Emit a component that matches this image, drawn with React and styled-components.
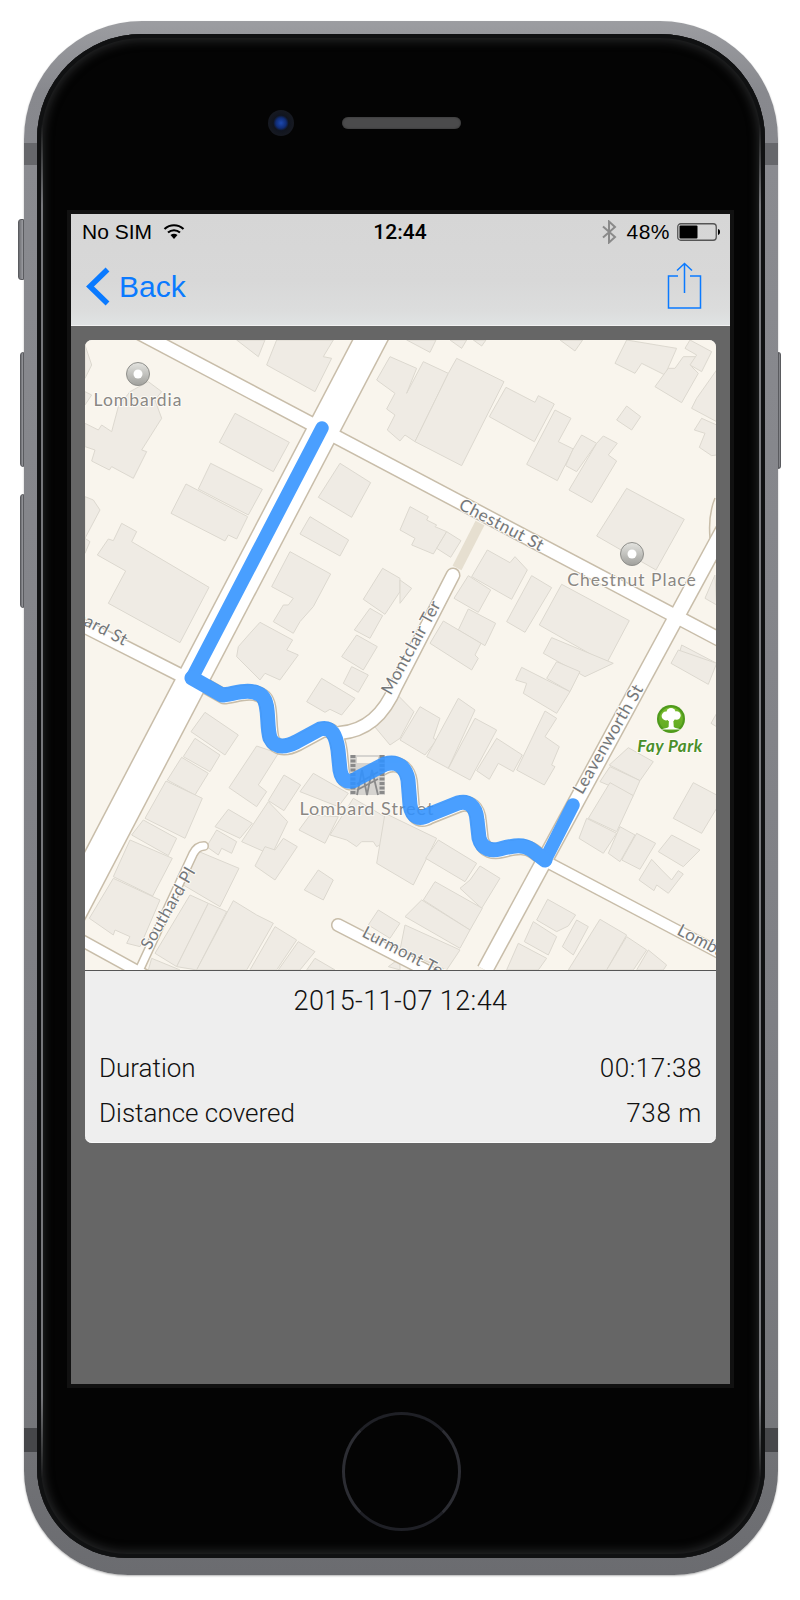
import React from "react";
import styled, { createGlobalStyle } from "styled-components";

const GlobalStyle = createGlobalStyle`
  html, body {
    margin: 0;
    background: #fff;
  }
`;

const Page = styled.div`
  width: 800px;
  height: 1600px;
  box-sizing: border-box;
  padding: 21px 0 0 24px;
  overflow: hidden;
`;

const Phone = styled.div`
  position: relative;
  width: 754px;
  height: 1554px;
  box-sizing: border-box;
  padding: 13px 13px 17px;
  border-radius: 118px 118px 104px 104px;
  background: linear-gradient(
    to bottom,
    #9c9da1 0,
    #88898e 70px,
    #87888d 122px,
    #66676b 122px,
    #66676b 144px,
    #8a8b90 144px,
    #7e7f84 1000px,
    #75767a 1407px,
    #46474a 1407px,
    #46474a 1431px,
    #717276 1431px,
    #6b6c70 1554px
  );
  box-shadow: 0 1px 2px rgba(0, 0, 0, 0.3);
`;

const SideButton = styled.div`
  position: absolute;
  top: ${(p) => p.$top}px;
  ${(p) => (p.$right ? "right: -3px;" : `left: ${-p.$out}px;`)}
  width: ${(p) => (p.$right ? 3 : p.$out)}px;
  height: ${(p) => p.$h}px;
  box-sizing: border-box;
  background: linear-gradient(to right, #6b6c70, #9b9ca1);
  border: 1px solid #5a5b5f;
  border-radius: ${(p) => (p.$right ? "0 3px 3px 0" : "3px 0 0 3px")};
`;

const Bezel = styled.div`
  position: relative;
  height: 100%;
  box-sizing: border-box;
  padding-right: 1px;
  display: flex;
  flex-direction: column;
  align-items: center;
  border-radius: 105px 105px 90px 90px;
  background: #040404;
  box-shadow: inset 0 0 0 4px #101112, inset 0 0 10px 7px #242526;

  /* thin light rim that only shows along the long sides */
  &::before,
  &::after {
    content: "";
    position: absolute;
    top: 90px;
    bottom: 80px;
    width: 2px;
    background: linear-gradient(
      to bottom,
      transparent,
      #77787c 6%,
      #77787c 94%,
      transparent
    );
  }
  &::before {
    left: 4px;
  }
  &::after {
    right: 4px;
  }
`;

const SensorRow = styled.div`
  width: 100%;
  height: 180px;
  display: grid;
  grid-template-columns: 1fr 119px 1fr;
  align-items: start;
  padding: 83px 0 0 2px;
  box-sizing: border-box;
`;

const Camera = styled.div`
  justify-self: end;
  width: 26px;
  height: 26px;
  margin: -7px 48px 0 0;
  border-radius: 50%;
  background: radial-gradient(circle, #1d49b0 0, #102c75 28%, #11151f 42%, #1c1e24 100%);
`;

const Speaker = styled.div`
  width: 119px;
  height: 12px;
  border-radius: 6px;
  background: #4b4b4c;
  box-shadow: inset 0 0 2px #2a2a2a;
`;

const Screen = styled.div`
  width: 659px;
  height: 1170px;
  flex: none;
  background: #666;
  outline: 4px solid #111;
  display: flex;
  flex-direction: column;
  font-family: "Liberation Sans", Arial, sans-serif;
`;

const TopBars = styled.header`
  height: 111px;
  flex: none;
  border-bottom: 1px solid #f2f2f2;
  background: linear-gradient(to bottom, #d6d6d6 0, #d8d8d8 60%, #dcdddd 88%, #e0e3e4 100%);
`;

const StatusBar = styled.div`
  height: 35px;
  padding: 0 9px 0 11px;
  display: grid;
  grid-template-columns: 1fr auto 1fr;
  align-items: center;
  font-size: 21px;
  color: #000;
`;

const StatusGroup = styled.div`
  display: flex;
  align-items: center;
  gap: ${(p) => p.$gap || 0}px;
  justify-content: ${(p) => (p.$end ? "flex-end" : "flex-start")};
`;

const Clock = styled.span`
  font-family: Roboto, "Liberation Sans", sans-serif;
  font-weight: 500;
  font-size: 21px;
  margin-left: -3px;
`;

const Percent = styled.span`
  letter-spacing: 0.5px;
  margin-right: -2px;
`;

const NavBar = styled.nav`
  height: 76px;
  padding: 0 28px 0 15px;
  display: flex;
  align-items: center;
  justify-content: space-between;
  color: #0a7aff;
`;

const BackLink = styled.div`
  display: flex;
  align-items: center;
  gap: 9px;
  font-size: 30px;
`;

const ShareSvg = styled.svg`
  margin-top: -3px;
`;

const Content = styled.main`
  padding: 14px;
`;

const Card = styled.section`
  border-radius: 7px;
  overflow: hidden;
  background: #eee;
  box-shadow: inset 0 -1px 0 #f9f9f9;
`;

const MapSvg = styled.svg`
  display: block;
  width: 631px;
  height: 630px;
  background: #f9f5ed;
  border-bottom: 1px solid #555;
`;

const Building = styled.polygon`
  fill: #efebe4;
  stroke: #dcd8cf;
  stroke-width: 3;
  stroke-linejoin: round;
`;

const RoadLine = styled.path`
  fill: none;
  stroke: ${(p) => p.$color};
  stroke-width: ${(p) => p.$width}px;
  stroke-linecap: ${(p) => (p.$round ? "round" : "butt")};
  stroke-linejoin: round;
`;

const RouteGroup = styled.g`
  opacity: 0.88;
`;

const RouteLine = styled.path`
  fill: none;
  stroke: #3192ff;
  stroke-width: ${(p) => p.$width}px;
  stroke-linecap: round;
  stroke-linejoin: round;
`;

const MapLabel = styled.text`
  font-family: Lato, "Open Sans", sans-serif;
  font-size: ${(p) => p.$size || 17}px;
  font-style: ${(p) => (p.$green ? "italic" : "normal")};
  font-weight: ${(p) => (p.$green ? 700 : 400)};
  letter-spacing: ${(p) => (p.$poi ? 1 : 0.5)}px;
  fill: ${(p) => (p.$green ? "#4a8f2a" : p.$poi ? "#8a8783" : "#74777a")};
  stroke: #fdfbf7;
  stroke-width: 2px;
  paint-order: stroke;
  text-anchor: ${(p) => p.$anchor || "middle"};
`;

const Details = styled.div`
  padding: 0 14px 7.5px;
  color: #111;
  font-family: Roboto, "Liberation Sans", sans-serif;
  font-weight: 300;
  font-size: 26px;
`;

const DateTitle = styled.div`
  height: 60px;
  line-height: 60px;
  text-align: center;
  font-size: 27px;
  letter-spacing: 0.4px;
  margin-bottom: 14.5px;
`;

const DetailRow = styled.div`
  height: 45px;
  display: flex;
  align-items: center;
  justify-content: space-between;
`;

const DetailValue = styled.span`
  letter-spacing: 0.6px;
`;

const HomeButton = styled.div`
  width: 119px;
  height: 119px;
  flex: none;
  box-sizing: border-box;
  margin: 28px 0 0 2px;
  border-radius: 50%;
  border: 3px solid #1f2026;
  border-left-color: #2c2d33;
  border-right-color: #2c2d33;
`;

// building outlines traced per zoomed tile, ox/oy = page origin, coords are 3x
const tiles = [
  {
    ox: 80,
    oy: 335,
    shapes: [
      "470,15 555,15 535,65",
      "590,15 760,15 730,65 755,70 705,170 560,90",
      "15,265 55,285 65,270 95,290 115,215 150,170 205,140 245,170 225,195 245,250 185,345 200,350 160,430 95,395 88,405 35,378 45,345 15,335",
      "465,235 628,322 580,410 418,322",
      "392,385 547,463 505,540 355,462",
      "318,447 503,545 470,612 445,600 435,618 273,535",
      "125,565 170,590 155,620 387,757 300,923 85,805 137,708 52,660 85,612 100,617",
      "15,485 40,495 60,525 15,610",
      "15,610 30,620 15,655",
      "15,30 35,90 15,130",
      "15,170 35,180 15,210",
      "780,385 872,443 815,547 715,487",
      "690,545 806,615 780,663 660,597",
      "630,650 752,717 700,815 660,860 640,895 580,860 610,810 625,810 640,790 575,755",
      "908,700 960,730 960,770 915,838 850,793",
      "870,820 908,842 870,910 823,885",
      "830,900 892,935 850,1005 785,965",
      "540,862 638,915 620,945 655,960 600,1035 555,1015 540,1035 470,965 475,935 510,895",
      "930,65 1010,100 980,175 1030,80 1105,115 1005,320 975,300 960,318 922,285 945,240 920,222 945,175 890,135",
    ],
  },
  {
    ox: 400,
    oy: 335,
    shapes: [
      "170,70 312,140 185,392 45,320 145,115",
      "318,157 405,202 415,182 463,207 403,320 268,245",
      "465,225 513,250 475,320 520,342 472,437 380,388",
      "545,300 590,325 530,410 497,392 518,345",
      "610,303 652,325 625,360 650,378 575,503 507,465 590,325",
      "680,213 722,245 695,285 650,255",
      "680,460 853,553 768,705 590,603",
      "680,15 830,40 795,120 725,85 705,115 645,85",
      "850,65 890,65 875,95 895,115 845,203 765,155 805,100 825,100",
      "870,15 935,50 905,110 870,90 890,60 855,40",
      "950,105 950,260 875,220 890,190",
      "905,250 950,270 950,360 935,362 898,337 915,295 883,285",
      "20,15 108,15 90,52",
      "150,15 200,15 185,40",
      "220,15 258,15 245,33",
      "480,15 548,15 525,48",
      "30,515 85,545 80,555 110,570 105,575 140,590 100,657 35,630 45,610 0,585",
      "140,590 183,617 152,667 110,640",
      "262,645 330,683 345,665 382,705 335,793 215,725",
      "395,722 455,758 375,892 320,860",
      "205,722 272,765 235,832 162,790",
      "205,822 287,865 255,932 175,885",
      "130,858 243,925 225,960 235,970 215,1005 90,925",
      "485,748 688,857 620,985 418,870",
      "455,908 640,985 555,1025 430,955",
      "0,735 35,760 0,805",
      "945,720 950,810 915,790",
      "845,930 950,985 830,985",
    ],
  },
  {
    ox: 80,
    oy: 650,
    shapes: [
      "815,50 865,75 835,127 790,100",
      "725,85 825,145 785,195 750,178 735,187 680,155",
      "375,187 475,255 435,315 333,245",
      "345,265 420,315 390,365 310,320",
      "305,322 385,370 345,435 262,390",
      "258,393 367,445 315,565 195,505",
      "190,510 290,565 265,617 155,555",
      "150,570 277,625 218,738 100,680",
      "100,685 240,750 180,890 140,880 150,860 105,840 100,855 28,805",
      "530,288 595,310 535,405 560,425 530,470 447,413",
      "612,375 662,405 612,482 565,452",
      "700,370 805,430 775,470 660,425",
      "565,455 623,515 575,615 485,575",
      "445,478 517,520 480,565 405,530",
      "410,540 470,575 455,610 425,595 415,615 380,590",
      "610,565 652,590 585,690 525,648 555,590 585,600",
      "690,495 775,500 735,580 657,540",
      "820,445 940,515 910,580 890,590 880,575 845,575 830,590 800,570 750,555",
      "715,660 760,690 730,750 673,720",
      "345,600 477,655 420,770 310,705",
      "330,735 385,760 290,950 225,910",
      "385,760 440,785 350,960 290,950",
      "460,752 530,795 580,820 500,960 350,960",
      "585,830 650,870 590,960 510,960",
      "655,875 705,905 660,960 595,960",
      "705,925 765,960 680,960",
      "895,780 960,820 930,865 865,825",
      "880,225 948,130 1002,185 960,265 930,285",
      "925,950 960,925 960,960",
      "215,925 300,960 205,960",
    ],
  },
  {
    ox: 400,
    oy: 650,
    shapes: [
      "470,35 540,65 510,125 440,85",
      "365,52 440,90 510,125 470,190 370,130 380,100 347,90",
      "60,170 120,205 100,265 110,270 75,315 0,270",
      "175,145 225,180 145,355 80,320",
      "225,205 290,240 210,390 145,355",
      "290,265 367,315 340,365 295,340 268,388 230,362",
      "435,183 470,205 435,260 478,290 455,345 465,350 433,405 350,360",
      "685,293 760,335 720,392 628,345",
      "630,350 720,392 700,437 600,395",
      "630,398 700,437 650,545 565,505",
      "560,505 650,550 610,610 537,565",
      "660,530 705,555 660,635 625,610",
      "710,550 767,580 720,658 665,630",
      "880,398 950,435 950,475 905,550 820,505",
      "815,555 900,600 850,650 775,605",
      "755,628 785,660 815,690 835,662 850,672 805,730 770,705 762,722 717,690",
      "835,0 950,40 925,103 813,40",
      "950,190 950,230 933,220",
      "-45,490 110,565 40,705 -70,640",
      "115,570 230,640 195,695 77,625",
      "240,648 300,685 245,775 180,715 210,690",
      "105,695 247,775 210,840 70,750",
      "65,750 210,840 180,895 15,800",
      "15,825 180,900 140,960 0,900",
      "443,748 527,795 505,828 470,845 410,810",
      "400,815 470,860 445,915 373,875",
      "530,810 565,830 520,915 487,890",
      "600,808 680,855 620,960 505,960",
      "680,860 740,900 700,960 620,960",
      "745,900 800,945 790,960 710,960",
      "355,880 440,925 415,960 320,960",
    ],
  },
];

const roads = [
  { d: "M130 328 L730 645", w: 12.5 },
  { d: "M385 312 L60 933", w: 30 },
  { d: "M60 614 L190 680", w: 12 },
  { d: "M547 862 L735 961", w: 10 },
  { d: "M730 518 L485 970", w: 14.5 },
  { d: "M70 934 L150 978", w: 10 },
  { d: "M204 846 Q197 846 193 854 L137 975", w: 7, round: true },
  { d: "M453 575 L396 686 Q378 730 340 733", w: 12, round: true },
  { d: "M338 925 L470 993", w: 11, round: true },
];

const straightPath = "M322 428 L192 678";
const crookedPath =
  "M192 678 L222 695 C232 695 250 686 262 696 C270 704 266 725 270 738 C276 750 288 746 296 742 L320 729 C332 726 336 736 338 750 L340 770 C342 782 350 784 358 778 L385 764 C398 760 406 768 408 780 L410 805 C412 818 420 820 428 815 L458 803 C468 800 476 806 477 820 L479 838 C482 850 492 851 500 849 C515 845 524 844 532 850 L545 860";
const lastLeg = "M545 860 L573 805";

const Pin = ({ x, y }) => (
  <g>
    <circle cx={x} cy={y} r="11.5" fill="url(#pinGrey)" stroke="#8f8f8b" strokeWidth="1" />
    <circle cx={x} cy={y} r="4.5" fill="#fff" />
  </g>
);

// the little crooked street emblem, grey towers with a zigzag between them
const LombardMark = () => (
  <g fill="none" stroke="#8a8a8a">
    <rect x="350" y="755" width="35" height="40" fill="#d6d4d0" stroke="none" />
    <path d="M353 755 V795 M382 755 V795" strokeWidth="5" strokeDasharray="3 1.5" />
    <path d="M357 760 H378" stroke="#f9f5ed" strokeWidth="6" />
    <path
      d="M357 795 L362 770 L367 795 L372 770 L378 795 M357 784 L378 772 M357 790 L378 779"
      strokeWidth="1.8"
    />
  </g>
);

const ParkIcon = () => (
  <g>
    <circle cx="671" cy="719" r="14" fill="#4f9a1c" />
    <circle cx="671" cy="719" r="11.8" fill="url(#parkGreen)" />
    <g fill="#fff">
      <circle cx="666" cy="716" r="4.4" />
      <circle cx="671" cy="712.5" r="4.6" />
      <circle cx="676.5" cy="715.5" r="4.2" />
      <circle cx="671" cy="717" r="4.5" />
      <path d="M669 719 H673.2 L673.8 727 C675 728 678 728.5 681 729.5 H661 C664 728.5 667.5 728 668.6 727 Z" />
    </g>
  </g>
);

const MapView = () => (
  <MapSvg viewBox="85 340 631 630">
    <defs>
      <linearGradient id="pinGrey" x1="0" y1="0" x2="0" y2="1">
        <stop offset="0" stopColor="#e4e4e0" />
        <stop offset="1" stopColor="#a0a09c" />
      </linearGradient>
      <linearGradient id="parkGreen" x1="0" y1="0" x2="0" y2="1">
        <stop offset="0" stopColor="#77bb2c" />
        <stop offset="1" stopColor="#5fa922" />
      </linearGradient>
    </defs>

    {tiles.map((t) => (
      <g key={t.ox + "-" + t.oy} transform={`translate(${t.ox} ${t.oy}) scale(0.3333)`}>
        {t.shapes.map((s) => (
          <Building key={s} points={s} />
        ))}
      </g>
    ))}

    <RoadLine d="M480 523 L457 568" $color="#e6dfd0" $width={10} />
    <RoadLine d="M715 498 Q708 515 710 538" $color="#c8bda9" $width={1.5} />
    {roads.map((r) => (
      <RoadLine key={r.d} d={r.d} $color="#c8bda9" $width={r.w + 3} $round={r.round} />
    ))}
    <RoadLine d={crookedPath} transform="translate(2 1.5)" $color="#c8bda9" $width={16} />
    {roads.map((r) => (
      <RoadLine key={r.d} d={r.d} $color="#fff" $width={r.w} $round={r.round} />
    ))}
    <RoadLine d={crookedPath} transform="translate(1.5 1)" $color="#fff" $width={14} />

    <MapLabel transform="translate(124 646) rotate(27.5)" $anchor="end">Lombard St</MapLabel>
    <MapLabel transform="translate(499 530) rotate(27.5)">Chestnut St</MapLabel>
    <MapLabel transform="translate(416 650) rotate(-61)">Montclair Ter</MapLabel>
    <MapLabel transform="translate(613 742) rotate(-60)">Leavenworth St</MapLabel>
    <MapLabel transform="translate(173 911) rotate(-60)">Southard Pl</MapLabel>
    <MapLabel transform="translate(361 936) rotate(27.5)" $anchor="start">Lurmont Ter</MapLabel>
    <MapLabel transform="translate(676 934) rotate(27.5)" $anchor="start">Lombard St</MapLabel>

    <Pin x={138} y={374} />
    <MapLabel x="138" y="406" $poi $size={17.5}>Lombardia</MapLabel>
    <Pin x={632} y={554} />
    <MapLabel x="632" y="586" $poi $size={17.5}>Chestnut Place</MapLabel>

    <LombardMark />
    <MapLabel x="367" y="815" $poi $size={18}>Lombard Street</MapLabel>

    <ParkIcon />
    <MapLabel x="670" y="752" $green>Fay Park</MapLabel>

    <RouteGroup>
      <RouteLine d={straightPath} $width={13.5} />
      <RouteLine d={lastLeg} $width={13.5} />
      <RouteLine d={crookedPath} $width={15} />
    </RouteGroup>
  </MapSvg>
);

const WifiIcon = () => (
  <svg width="22" height="17" viewBox="0 0 22 17">
    <path d="M1.5 6 C7 1 15 1 20.5 6" fill="none" stroke="#000" strokeWidth="2.2" />
    <path d="M5 9.5 C8.5 6.5 13.5 6.5 17 9.5" fill="none" stroke="#000" strokeWidth="2.2" />
    <path d="M7.5 12 C9.8 10.4 12.2 10.4 14.5 12 L11 16 Z" fill="#000" />
  </svg>
);

const BluetoothIcon = () => (
  <svg width="16" height="24" viewBox="0 0 16 24">
    <path d="M2 6.5 L14 17 L8 22.5 V1.5 L14 7 L2 17.5" fill="none" stroke="#8a8a8a" strokeWidth="2" />
  </svg>
);

const BatteryIcon = () => (
  <svg width="44" height="18" viewBox="0 0 44 18">
    <rect x="0.75" y="0.75" width="38.5" height="16.5" rx="3" fill="none" stroke="#555" strokeWidth="1.3" />
    <rect x="2.5" y="2.5" width="18" height="13" rx="1" fill="#000" />
    <path d="M41 6 C42.6 6.4 43 7.6 43 9 C43 10.4 42.6 11.6 41 12 Z" fill="#000" />
  </svg>
);

const BackChevron = () => (
  <svg width="24" height="40" viewBox="0 0 24 40">
    <path d="M21.5 2.5 L4 19.5 L21.5 36.5" fill="none" stroke="#0a7aff" strokeWidth="5.5" />
  </svg>
);

const ShareIcon = () => (
  <ShareSvg width="35" height="48" viewBox="0 0 35 48">
    <path d="M11 14 H1.5 V46 H33.5 V14 H23" fill="none" stroke="#0a7aff" strokeWidth="1.5" />
    <path d="M17.5 31 V1.5 M10 8.5 L17.5 1.5 L25 8.5" fill="none" stroke="#0a7aff" strokeWidth="1.5" />
  </ShareSvg>
);

export default function App() {
  return (
    <Page>
      <GlobalStyle />
      <Phone>
        <SideButton $top={198} $h={61} $out={6} />
        <SideButton $top={331} $h={115} $out={4} />
        <SideButton $top={473} $h={114} $out={4} />
        <SideButton $right $top={331} $h={117} />
        <Bezel>
          <SensorRow>
            <Camera />
            <Speaker />
          </SensorRow>
          <Screen>
            <TopBars>
              <StatusBar>
                <StatusGroup $gap={11}>
                  No SIM
                  <WifiIcon />
                </StatusGroup>
                <Clock>12:44</Clock>
                <StatusGroup $end $gap={9}>
                  <BluetoothIcon />
                  <Percent>48%</Percent>
                  <BatteryIcon />
                </StatusGroup>
              </StatusBar>
              <NavBar>
                <BackLink>
                  <BackChevron />
                  Back
                </BackLink>
                <ShareIcon />
              </NavBar>
            </TopBars>
            <Content>
              <Card>
                <MapView />
                <Details>
                  <DateTitle>2015-11-07 12:44</DateTitle>
                  <DetailRow>
                    <span>Duration</span>
                    <DetailValue>00:17:38</DetailValue>
                  </DetailRow>
                  <DetailRow>
                    <span>Distance covered</span>
                    <DetailValue>738 m</DetailValue>
                  </DetailRow>
                </Details>
              </Card>
            </Content>
          </Screen>
          <HomeButton />
        </Bezel>
      </Phone>
    </Page>
  );
}
